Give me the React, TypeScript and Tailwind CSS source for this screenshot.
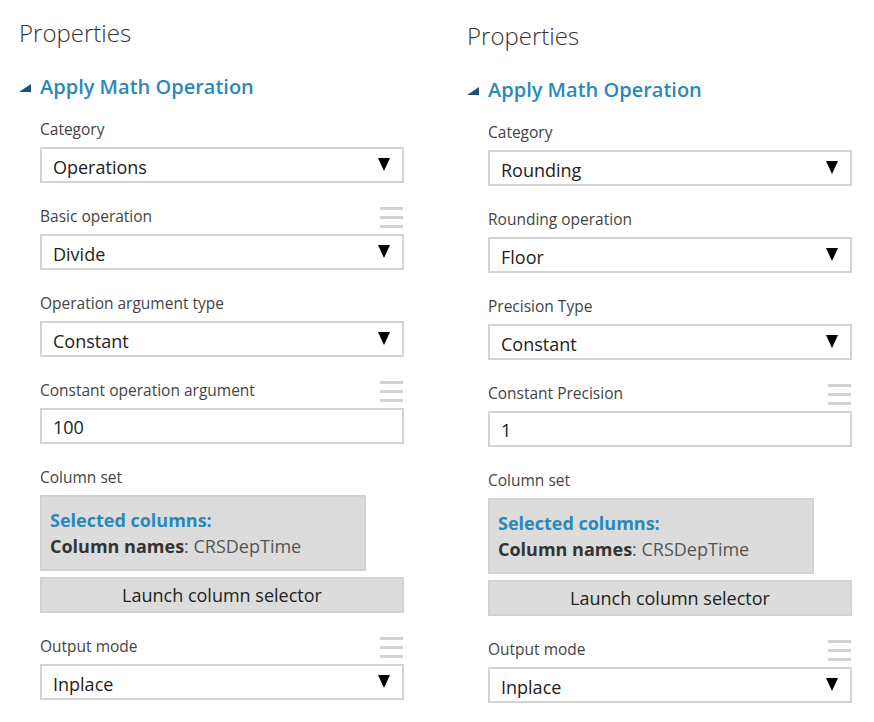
const FONT = "font-['Open_Sans',_'Noto_Sans',_sans-serif]";

type Field =
  | { kind: "select"; label: string; value: string; menu?: boolean }
  | { kind: "text"; label: string; value: string; menu?: boolean }
  | { kind: "columns"; label: string; names: string };

function Hamburger() {
  return (
    <div className="flex w-[23px] flex-col gap-[6px]">
      <span className="h-[3px] bg-[#d2d2d2]" />
      <span className="h-[3px] bg-[#d2d2d2]" />
      <span className="h-[3px] bg-[#d2d2d2]" />
    </div>
  );
}

function Label({ text, menu }: { text: string; menu?: boolean }) {
  return (
    <div className="mb-[5px] flex h-[24px] w-[364px] items-center justify-between pr-[1px]">
      <span className="text-[15.5px] text-[#444]">{text}</span>
      {menu && <Hamburger />}
    </div>
  );
}

function SelectBox({ value }: { value: string }) {
  return (
    <div className="flex h-[36px] w-[364px] items-center justify-between border-2 border-[#d4d4d4] bg-white pl-[11px] pr-[12px]">
      <span className="pt-[4px] text-[18px] text-[#222]">{value}</span>
      <svg width="12" height="13" viewBox="0 0 12 13" className="mb-[2px]">
        <polygon points="0,0 12,0 6,13" fill="#000" />
      </svg>
    </div>
  );
}

function TextBox({ value }: { value: string }) {
  return (
    <div className="flex h-[36px] w-[364px] items-center border-2 border-[#d4d4d4] bg-white pl-[11px]">
      <span className="pt-[3px] text-[18px] text-[#222]">{value}</span>
    </div>
  );
}

function Panel({ fields, offset }: { fields: Field[]; offset?: boolean }) {
  return (
    <div className={`w-[448px] shrink-0 pl-[19px] ${offset ? "pt-[20px]" : "pt-[17px]"}`}>
      <h1 className="text-[24px] font-light leading-[32px] text-[#333]">Properties</h1>
      <div className="mt-[24px] flex h-[28px] items-center">
        <svg width="12" height="8" viewBox="0 0 12 8" className="mr-[9px] mt-[2px]">
          <polygon points="12,0 12,8 0,8" fill="#1f5275" />
        </svg>
        <span className="text-[20px] font-semibold text-[#2a88bb]">Apply Math Operation</span>
      </div>
      <div className="mt-[17px] pl-[21px]">
        {fields.map((f) => (
          <div key={f.label} className="mb-[22px]">
            <Label text={f.label} menu={f.kind !== "columns" ? f.menu : false} />
            {f.kind === "text" ? (
              <TextBox value={f.value} />
            ) : f.kind === "columns" ? (
              <div>
                <div className="flex h-[76px] w-[326px] flex-col justify-center border-2 border-[#d2d2d2] bg-[#dcdcdc] pl-[8px]">
                  <div className="text-[18px] font-bold leading-[26px] text-[#2a88bb]">Selected columns:</div>
                  <div className="text-[18px] leading-[26px] text-[#555]">
                    <span className="font-bold text-[#333]">Column names</span>: {f.names}
                  </div>
                </div>
                <div className="mt-[6px] flex h-[36px] w-[364px] items-center justify-center border-2 border-[#d2d2d2] bg-[#dcdcdc] text-[18px] text-[#222]">
                  Launch column selector
                </div>
              </div>
            ) : (
              <SelectBox value={f.value} />
            )}
          </div>
        ))}
      </div>
    </div>
  );
}

export default function App() {
  const left: Field[] = [
    { kind: "select", label: "Category", value: "Operations" },
    { kind: "select", label: "Basic operation", value: "Divide", menu: true },
    { kind: "select", label: "Operation argument type", value: "Constant" },
    { kind: "text", label: "Constant operation argument", value: "100", menu: true },
    { kind: "columns", label: "Column set", names: "CRSDepTime" },
    { kind: "select", label: "Output mode", value: "Inplace", menu: true },
  ];
  const right: Field[] = [
    { kind: "select", label: "Category", value: "Rounding" },
    { kind: "select", label: "Rounding operation", value: "Floor" },
    { kind: "select", label: "Precision Type", value: "Constant" },
    { kind: "text", label: "Constant Precision", value: "1", menu: true },
    { kind: "columns", label: "Column set", names: "CRSDepTime" },
    { kind: "select", label: "Output mode", value: "Inplace", menu: true },
  ];
  return (
    <div className={`flex h-[722px] w-[874px] overflow-hidden bg-white ${FONT}`}>
      <Panel fields={left} />
      <Panel fields={right} offset />
    </div>
  );
}
